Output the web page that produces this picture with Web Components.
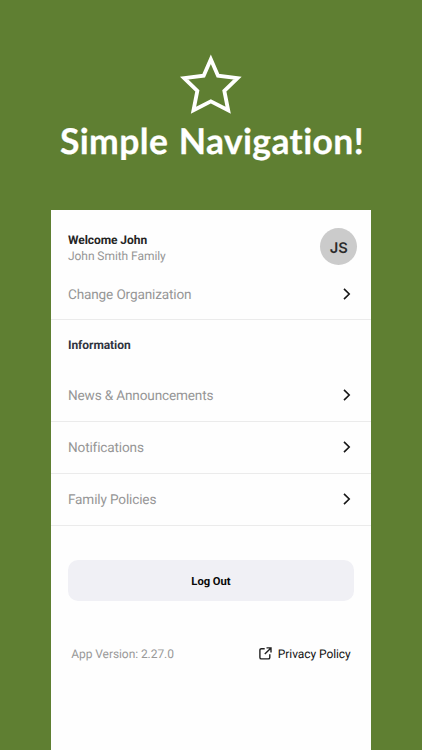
<!DOCTYPE html>
<html lang="en">
<head>
<meta charset="utf-8">
<title>Simple Navigation</title>
<style>
html,body{margin:0;height:100%}
body{background:#5f7f32;font-family:Roboto,"Liberation Sans",sans-serif;overflow:hidden;text-rendering:geometricPrecision}
</style>
</head>
<body>
<promo-screen></promo-screen>
<script>
const define = (name, html) => customElements.define(name, class extends HTMLElement {
  constructor() {
    super();
    this.attachShadow({mode: 'open'}).innerHTML = html;
  }
});

define('star-icon', `<style>:host{display:block;width:82px;height:75px}svg{display:block}</style>
<svg width="82" height="75" viewBox="0 0 246 225"><path d="M122.500 43L144 92L202.500 99.500L163 138L174.500 195.500L122.500 169L70.500 195.500L82 138L42.500 99.500L101 92Z" fill="none" stroke="#fff" stroke-width="11.500" stroke-miterlimit="10"/></svg>`);

define('promo-title', `<style>:host{display:block;padding-left:2px;font:700 35.500px/42px Lato,"Open Sans",sans-serif;color:#fff;white-space:nowrap;letter-spacing:.36px;word-spacing:1.500px;-webkit-text-stroke:.25px #fff}</style><slot></slot>`);

define('chevron-icon', `<style>:host{display:block;width:8px;height:12px}svg{display:block}</style>
<svg width="8" height="12" viewBox="0 0 8 12"><path d="M1 .9L6.200 6L1 11.100" fill="none" stroke="#161616" stroke-width="1.600"/></svg>`);

define('user-avatar', `<style>:host{display:flex;align-items:center;justify-content:center;width:37px;height:37px;border-radius:50%;background:#cbcbcb;color:#2b2b2b;font:600 14.700px/18px Inter,sans-serif;box-sizing:border-box;padding-top:3px}</style><slot></slot>`);

define('profile-header', `<style>:host{display:flex;justify-content:space-between;padding:18px 13.500px 0 16.700px;height:58px;box-sizing:border-box}
.names{padding-top:4px}
.w{font-weight:700;font-size:12px;line-height:16px;color:#252525;letter-spacing:-.06px}
.f{font-size:12px;line-height:16px;color:#969696;letter-spacing:-.06px}</style>
<div class="names"><div class="w"><slot name="greeting"></slot></div><div class="f"><slot name="family"></slot></div></div><slot name="avatar"></slot>`);

define('nav-row', `<style>:host{display:flex;align-items:center;justify-content:space-between;height:52.200px;box-sizing:border-box;border-bottom:1px solid #ebebeb;padding:0 19.700px 0 16.700px;font-size:13.600px;line-height:18px;letter-spacing:-.15px;color:#969696}span{padding-top:2px}</style>
<span><slot></slot></span><chevron-icon></chevron-icon>`);

define('section-title', `<style>:host{display:flex;align-items:center;height:49.300px;padding-left:16.700px;font-weight:700;font-size:12px;line-height:16px;color:#303440;letter-spacing:-.06px}span{padding-top:1px}</style><span><slot></slot></span>`);

define('action-button', `<style>:host{display:block;padding:34px 16.700px 0}
button{display:block;width:100%;height:41.300px;border:0;border-radius:10px;background:#f0f0f5;color:#080808;font:700 11.200px/16px Roboto,sans-serif;text-rendering:inherit;padding:2px 0 0}</style><button><slot></slot></button>`);

define('external-icon', `<style>:host{display:block;width:13px;height:13px}svg{display:block}</style>
<svg width="13" height="13" viewBox="0 0 13 13"><path d="M5.700 1.700H2.400Q.9 1.700 .9 3.200V10.400Q.9 11.900 2.400 11.900H9.300Q10.800 11.900 10.800 10.400V7.300M7.500 .9H12V5.500M12 .9L5.800 7.100" fill="none" stroke="#202020" stroke-width="1.400"/></svg>`);

define('app-footer', `<style>:host{display:flex;justify-content:space-between;align-items:center;padding:0 20px;margin-top:44.400px;height:16px;font-size:12px;line-height:16px;color:#999;letter-spacing:-.07px}
.p{display:flex;align-items:center;gap:6px;color:#151515}external-icon{position:relative;top:-.5px}</style>
<span><slot name="version"></slot></span><span class="p"><external-icon></external-icon><slot name="policy"></slot></span>`);

define('menu-panel', `<style>:host{display:block;width:319.400px;background:#fefefe;flex:1}</style><slot></slot>`);

define('promo-screen', `<style>:host{display:flex;flex-direction:column;align-items:center;height:750px;padding-top:45px;box-sizing:border-box}
promo-title{height:90px}</style>
<star-icon></star-icon>
<promo-title>Simple Navigation!</promo-title>
<menu-panel>
<profile-header><span slot="greeting">Welcome John</span><span slot="family">John Smith Family</span><user-avatar slot="avatar">JS</user-avatar></profile-header>
<nav-row>Change Organization</nav-row>
<section-title>Information</section-title>
<nav-row>News &amp; Announcements</nav-row>
<nav-row>Notifications</nav-row>
<nav-row>Family Policies</nav-row>
<action-button>Log Out</action-button>
<app-footer><span slot="version">App Version: 2.27.0</span><span slot="policy">Privacy Policy</span></app-footer>
</menu-panel>`);
</script>
</body>
</html>
